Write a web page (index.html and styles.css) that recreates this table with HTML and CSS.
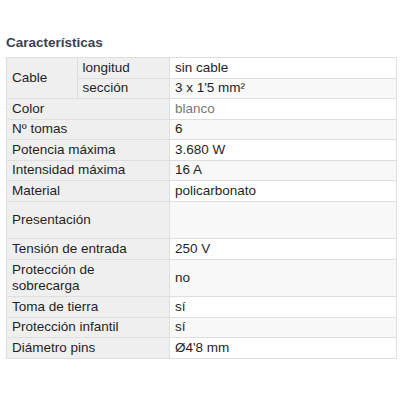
FILE: index.html
```html
<!DOCTYPE html>
<html lang="es">
<head>
<meta charset="utf-8">
<link rel="stylesheet" href="styles.css">
</head>
<body>
<div class="specs">
  <h2 class="specs-title">Características</h2>
  <table class="specs-table">
    <colgroup>
      <col class="c1"><col class="c2"><col class="c3">
    </colgroup>
    <tbody>
      <tr><th rowspan="2">Cable</th><th class="sub">longitud</th><td>sin cable</td></tr>
      <tr><th class="sub">sección</th><td>3 x 1'5 mm²</td></tr>
      <tr><th colspan="2">Color</th><td class="muted">blanco</td></tr>
      <tr><th colspan="2">Nº tomas</th><td>6</td></tr>
      <tr><th colspan="2">Potencia máxima</th><td>3.680 W</td></tr>
      <tr><th colspan="2">Intensidad máxima</th><td>16 A</td></tr>
      <tr><th colspan="2">Material</th><td>policarbonato</td></tr>
      <tr class="tall"><th colspan="2">Presentación</th><td></td></tr>
      <tr><th colspan="2">Tensión de entrada</th><td>250 V</td></tr>
      <tr class="tall"><th colspan="2">Protección de<br>sobrecarga</th><td>no</td></tr>
      <tr><th colspan="2">Toma de tierra</th><td>sí</td></tr>
      <tr><th colspan="2">Protección infantil</th><td>sí</td></tr>
      <tr><th colspan="2">Diámetro pins</th><td>Ø4'8 mm</td></tr>
    </tbody>
  </table>
</div>
</body>
</html>
```

FILE: styles.css
```css
html, body {
  margin: 0;
  padding: 0;
  background: #ffffff;
}

.specs {
  padding: 35px 4px 0 6px;
  font-family: "Liberation Sans", Arial, Helvetica, sans-serif;
  color: #1f1f1f;
}

.specs-title {
  margin: 0 0 6px 0;
  font-size: 13.5px;
  line-height: 16px;
  font-weight: bold;
  color: #3c4152;
}

.specs-table {
  width: 390px;
  border-collapse: collapse;
  table-layout: fixed;
  font-size: 13.5px;
  line-height: 16px;
}

.c1 { width: 70.5px; }
.c2 { width: 92.5px; }
.c3 { width: 227px; }

.specs-table th,
.specs-table td {
  border: 1px solid #dedede;
  padding: 1.75px 5px;
  text-align: left;
  vertical-align: middle;
  font-weight: normal;
}

.specs-table th {
  background: #efefef;
}

.specs-table td {
  background: #ffffff;
}

.specs-table tr:nth-child(even) td {
  background: #f8f8f8;
}

.specs-table tr.tall th,
.specs-table tr.tall td {
  height: 33px;
}

.muted {
  color: #777777;
}
```
